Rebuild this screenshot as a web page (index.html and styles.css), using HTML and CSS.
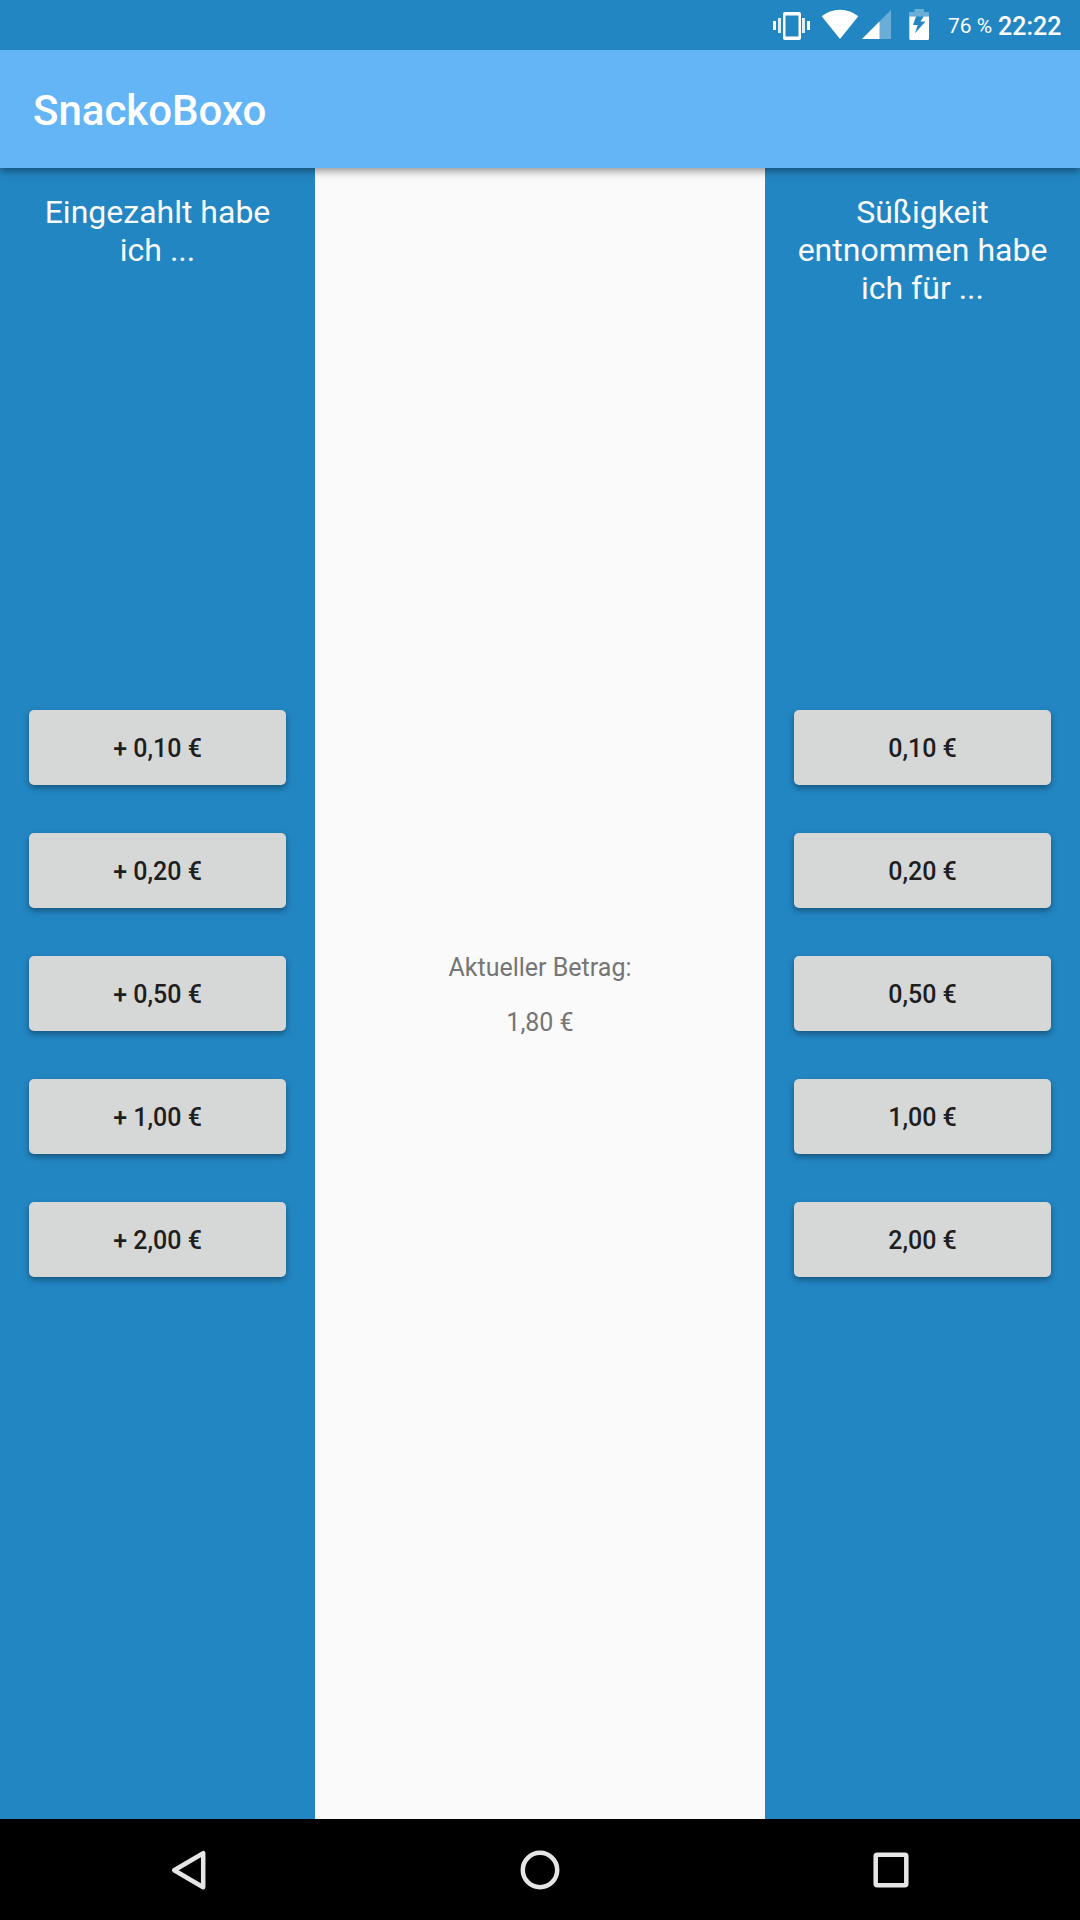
FILE: index.html
```html
<!DOCTYPE html>
<html lang="de">
<head>
<meta charset="utf-8">
<title>SnackoBoxo</title>
<link rel="stylesheet" href="styles.css">
</head>
<body>
<div class="screen">
  <div class="status-bar">
    <svg class="status-icons" width="160" height="50" viewBox="770 0 160 50" fill="#fff">
      <!-- vibrate -->
      <path d="M773 21h3v9h-3zM807 21h3v9h-3z"/>
      <path d="M778 18h3v15h-3zM802 18h3v15h-3z" opacity=".85"/>
      <path fill-rule="evenodd" d="M785 12h14a2 2 0 0 1 2 2v24a2 2 0 0 1-2 2h-14a2 2 0 0 1-2-2V14a2 2 0 0 1 2-2zM785.5 15.5v21h13v-21z"/>
      <!-- wifi -->
      <path d="M840 39L821.700 16.300A29 29 0 0 1 858.300 16.300z"/>
      <!-- mobile signal -->
      <path d="M891 10v29h-29z" opacity=".33"/>
      <path d="M879.500 21.500V39H862z"/>
      <!-- battery -->
      <path d="M914.500 9h9.500v3h5v4.500h-20V12h5.500z" opacity=".33"/>
      <path fill-rule="evenodd" d="M909.300 16.500h19.700V38.500a1.500 1.500 0 0 1-1.500 1.500h-16.700a1.500 1.500 0 0 1-1.500-1.500zM916 16.500L913 25h4.700L915 33.300 925.500 21.500h-5l3.200-5z"/>
    </svg>
    <span class="battery-level">76 %</span>
    <span class="clock">22:22</span>
  </div>
  <header class="app-bar"><h1 class="app-title">SnackoBoxo</h1></header>
  <main class="columns">
    <section class="panel">
      <h2 class="panel-title">Eingezahlt habe ich ...</h2>
      <div class="amounts">
        <button class="amount">+ 0,10 €</button>
        <button class="amount">+ 0,20 €</button>
        <button class="amount">+ 0,50 €</button>
        <button class="amount">+ 1,00 €</button>
        <button class="amount">+ 2,00 €</button>
      </div>
    </section>
    <section class="balance">
      <p class="balance-text">Aktueller Betrag:</p>
      <p class="balance-text">1,80 €</p>
    </section>
    <section class="panel">
      <h2 class="panel-title">Süßigkeit entnommen habe ich für ...</h2>
      <div class="amounts">
        <button class="amount">0,10 €</button>
        <button class="amount">0,20 €</button>
        <button class="amount">0,50 €</button>
        <button class="amount">1,00 €</button>
        <button class="amount">2,00 €</button>
      </div>
    </section>
  </main>
  <nav class="nav-bar">
    <svg width="40" height="40" viewBox="0 0 40 40"><path d="M34.200 3.200v34L5.200 20.200z"/></svg>
    <svg width="40" height="40" viewBox="0 0 40 40"><circle cx="20" cy="20" r="17.200"/></svg>
    <svg width="40" height="40" viewBox="0 0 40 40"><rect x="4.700" y="4.700" width="30.600" height="30.600" rx="1.500"/></svg>
  </nav>
</div>
</body>
</html>
```
FILE: styles.css
```css
* { box-sizing: border-box; }
body { margin: 0; font-family: Roboto, sans-serif; }
h1, h2, p { margin: 0; font-weight: 400; }

.screen {
  width: 1080px;
  height: 1920px;
  display: flex;
  flex-direction: column;
  overflow: hidden;
  background: #2286c3;
}

.status-bar {
  height: 50px;
  display: flex;
  justify-content: flex-end;
  padding-right: 18px;
  background: #2286c3;
  color: #fff;
  white-space: nowrap;
  z-index: 2;
}
.status-icons { display: block; margin-right: 18px; }
.battery-level { width: 50px; font-size: 21px; line-height: 53px; }
.clock { width: 64px; font-size: 25px; font-weight: 500; line-height: 54px; }

.app-bar {
  height: 118px;
  display: flex;
  align-items: center;
  padding: 3px 33px 0;
  background: #64b5f6;
  box-shadow: 0 3px 8px rgba(0, 0, 0, .42);
  z-index: 1;
}
.app-title { color: #fff; font-size: 42px; line-height: 50px; font-weight: 500; }

.columns {
  height: 1651px;
  display: grid;
  grid-template-columns: 315px 450px 315px;
}
.panel {
  display: grid;
  grid-template-rows: 542px auto;
  background: #2286c3;
}
.panel-title {
  padding: 25px 25px 0;
  color: #fafafa;
  font-size: 32px;
  line-height: 38px;
  text-align: center;
}
.amounts {
  display: flex;
  flex-direction: column;
  gap: 48px;
  padding: 0 29px;
}
.amount {
  height: 75px;
  padding: 2px 0 0;
  border: 0;
  border-radius: 5px;
  background: #d6d7d7;
  box-shadow: 0 3px 6px rgba(0, 0, 0, .36);
  color: #1e1e1e;
  font: 500 25px/30px Roboto, sans-serif;
}

.balance {
  display: flex;
  flex-direction: column;
  justify-content: center;
  gap: 25px;
  padding-top: 4px;
  background: #fafafa;
  color: #757575;
  text-align: center;
}
.balance-text { font-size: 25px; line-height: 30px; }

.nav-bar {
  height: 101px;
  display: flex;
  justify-content: center;
  gap: 311px;
  padding-top: 31px;
  background: #000;
}
.nav-bar svg { fill: none; stroke: #e6e6e6; stroke-width: 4.500; stroke-linejoin: round; }
```
